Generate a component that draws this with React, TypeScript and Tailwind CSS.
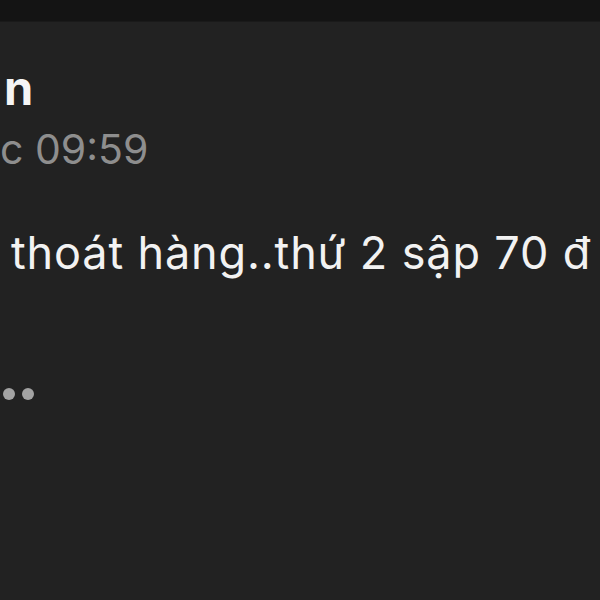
import React from "react";

// Cropped chat message view
export default function App() {
  return (
    <div
      className="w-[600px] h-[600px] overflow-hidden bg-[#222222] flex flex-col"
      style={{ fontFamily: "Inter, 'Noto Sans', sans-serif" }}
    >
      {/* Top bar */}
      <div className="h-[22px] shrink-0 bg-[#141414] border-b border-[#1a1a1a]" />

      <div className="flex flex-col">
        {/* Sender name (cut off) */}
        <div className="mt-[36px] pl-[4px] text-[47px] leading-[60px] font-bold text-[#f5f5f5]">
          n
        </div>

        {/* Time */}
        <div className="mt-[6px] text-[41px] leading-[50px] text-[#8e8e8e] whitespace-nowrap">
          c 09:59
        </div>

        {/* Message body */}
        <div className="mt-[49px] pl-[11px] text-[45px] leading-[60px] tracking-[0.85px] text-[#f2f2f2] whitespace-nowrap">
          thoát hàng..thứ 2 sập 70 đ
        </div>

        {/* Typing dots */}
        <div className="mt-[105px] flex items-center gap-[7px] pl-[3px]">
          <span className="w-[12px] h-[12px] rounded-full bg-[#a3a3a3]" />
          <span className="w-[12px] h-[12px] rounded-full bg-[#a3a3a3]" />
        </div>
      </div>
    </div>
  );
}
